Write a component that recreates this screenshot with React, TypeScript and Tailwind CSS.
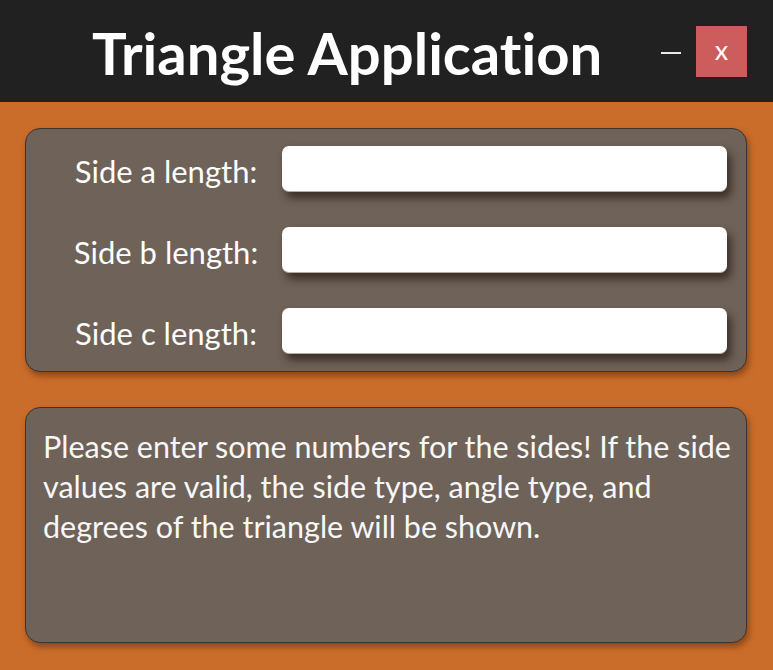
const labels = ["Side a length:", "Side b length:", "Side c length:"];

export default function App() {
  return (
    <div className="w-[773px] h-[670px] bg-[#cb6d2a] font-['Lato',sans-serif] [font-variant-ligatures:none] flex flex-col overflow-hidden">
      <header className="h-[102px] bg-[#212121] flex items-center shrink-0">
        <h1 className="ml-[92px] mt-[4px] text-[58px] leading-none font-bold text-white">
          Triangle Application
        </h1>
        <div className="ml-auto mr-[26px] flex items-center">
          <div className="w-[20px] h-[2px] bg-[#e8e8e8] mt-[3px]" />
          <button className="ml-[15px] w-[51px] h-[51px] bg-[#cd5c5c] text-white text-[27px] leading-none flex items-center justify-center pb-[4px]">
            x
          </button>
        </div>
      </header>

      <main className="flex flex-col gap-[35px] pt-[26px] pl-[25px] pr-[26px]">
        <section className="rounded-[15px] border border-[#3b3330] bg-[#6e6259] shadow-[2px_4px_6px_rgba(60,25,0,0.45)] pl-[24px] pr-[19px] py-[17px] flex flex-col gap-[35px]">
          {labels.map((l) => (
            <div key={l} className="flex items-center">
              <label className="w-[232px] text-center text-white text-[31px] leading-none pt-[5px]">{l}</label>
              <input
                className="flex-1 h-[46px] rounded-[7px] bg-white border-b border-[#b5aca6] shadow-[4px_6px_9px_rgba(45,32,25,0.8)] outline-none"
                type="text"
              />
            </div>
          ))}
        </section>

        <section className="h-[236px] rounded-[15px] border border-[#3b3330] bg-[#6e6259] shadow-[2px_4px_6px_rgba(60,25,0,0.45)] pl-[17px] pr-[8px] pt-[18px]">
          <p className="text-[30.5px] leading-[40px] text-[#f7f7f7]">
            Please enter some numbers for the sides! If the side values are valid, the side type, angle type, and degrees of the triangle will be shown.
          </p>
        </section>
      </main>
    </div>
  );
}
